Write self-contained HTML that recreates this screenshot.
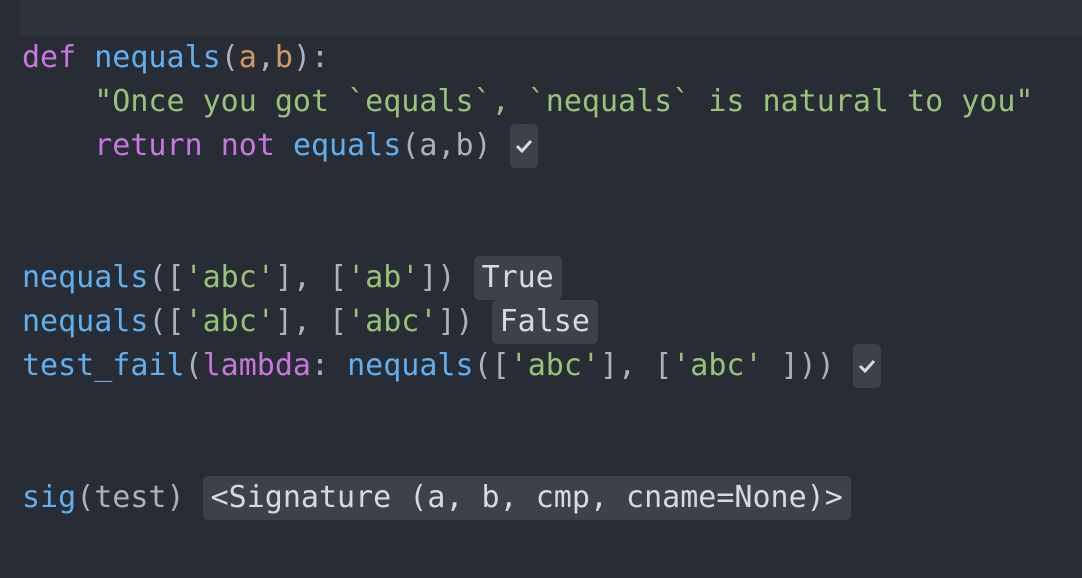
<!DOCTYPE html>
<html><head><style>
body{margin:0;width:1082px;height:578px;background:#282c34;overflow:hidden;position:relative;font-family:"DejaVu Sans Mono","Liberation Mono",monospace;font-size:30px;color:#abb2bf}
.top{position:absolute;left:20px;top:0;right:0;height:36px;background:#2e323b}
.l{position:absolute;left:22px;height:44px;line-height:44px;white-space:pre}
.k{color:#c678dd}.f{color:#61afef}.p{color:#d19a66}.s{color:#98c379}
.b{display:inline-block;background:#3d414c;border-radius:5px;height:44px;vertical-align:top;padding:0 8px;color:#d7dae0}
.c{display:inline-block;background:#3d414c;border-radius:5px;width:28px;height:44px;vertical-align:top;position:relative}
.c svg{position:absolute;left:5px;top:13px}
</style></head><body>
<div class="top"></div>
<div class="l" style="top:36px"><span class="k">def</span> <span class="f">nequals</span>(<span class="p">a</span>,<span class="p">b</span>):</div>
<div class="l" style="top:80px">    <span class="s">"Once you got `equals`, `nequals` is natural to you"</span></div>
<div class="l" style="top:124px">    <span class="k">return</span> <span class="k">not</span> <span class="f">equals</span>(a,b) <span class="c"><svg width="18" height="16" viewBox="0 0 18 16"><path d="M2 9 L7 14 L16 4" stroke="#d7dae0" stroke-width="3" fill="none"/></svg></span></div>
<div class="l" style="top:256px"><span class="f">nequals</span>([<span class="s">'abc'</span>], [<span class="s">'ab'</span>]) <span class="b">True</span></div>
<div class="l" style="top:300px"><span class="f">nequals</span>([<span class="s">'abc'</span>], [<span class="s">'abc'</span>]) <span class="b">False</span></div>
<div class="l" style="top:344px"><span class="f">test_fail</span>(<span class="k">lambda</span>: <span class="f">nequals</span>([<span class="s">'abc'</span>], [<span class="s">'abc'</span> ])) <span class="c"><svg width="18" height="16" viewBox="0 0 18 16"><path d="M2 9 L7 14 L16 4" stroke="#d7dae0" stroke-width="3" fill="none"/></svg></span></div>
<div class="l" style="top:476px"><span class="f">sig</span>(test) <span class="b">&lt;Signature (a, b, cmp, cname=None)&gt;</span></div>
</body></html>
